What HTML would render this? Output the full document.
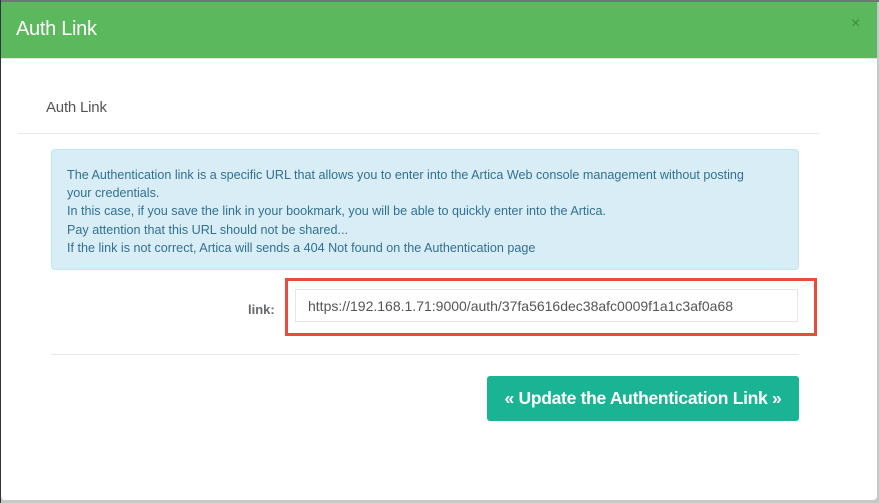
<!DOCTYPE html>
<html><head><meta charset="utf-8"><style>
body{margin:0;width:879px;height:503px;overflow:hidden;background:#c8c8c8;font-family:"Liberation Sans",sans-serif;position:relative}
.lb0{position:absolute;left:0;top:0;width:1px;height:503px;background:#2f3640}
.tp{position:absolute;left:0;top:0;width:879px;height:2px;background:#6a7a70}
.m{position:absolute;left:1px;top:2px;width:876px;height:498px;background:#fff;border-radius:0 0 4px 4px;overflow:hidden}
.h{position:absolute;left:0;top:0;width:100%;height:56px;background:#5cb85c;border-bottom:1px solid #e5e5e5}
.h span{position:absolute;left:15px;top:16px;font-size:20px;color:#fff;letter-spacing:-0.3px}
.h i{position:absolute;left:850px;top:13px;font-style:normal;color:#3f8a3f;font-size:16px}
.t{position:absolute;left:45px;top:97px;font-size:15px;color:#555;letter-spacing:-0.2px}
.hr1{position:absolute;left:17px;top:131px;width:801px;height:1px;background:#e7eaec}
.al{position:absolute;left:50px;top:147px;width:746px;height:119px;background:#d9edf7;border:1px solid #bce8f1;border-radius:4px}
.al p{margin:0;position:absolute;left:15px;top:16px;width:695px;font-size:12.6px;line-height:18.2px;color:#31708f}
.lb{position:absolute;left:247px;top:300px;font-size:13px;font-weight:bold;color:#676a6c}
.rb{position:absolute;left:284px;top:276px;width:526px;height:52px;border:3px solid #e74c3c}
.in{position:absolute;left:294px;top:287px;width:503px;height:33px;border:1px solid #e5e6e7;box-sizing:border-box;font-size:14px;color:#555;padding:8px 12px;line-height:16px;white-space:nowrap}
.hr2{position:absolute;left:50px;top:352px;width:748px;height:1px;background:#e7eaec}
.bt{position:absolute;left:486px;top:374px;width:312px;height:45px;background:#1ab394;border-radius:3px;color:#fff;font-weight:bold;font-size:17.5px;text-align:center;line-height:45px;letter-spacing:-0.3px}
</style></head><body>
<div class="tp"></div>
<div class="m">
<div class="h"><span>Auth Link</span><i>×</i></div>
<div class="t">Auth Link</div>
<div class="hr1"></div>
<div class="al"><p>The Authentication link is a specific URL that allows you to enter into the Artica Web console management without posting your credentials.<br>In this case, if you save the link in your bookmark, you will be able to quickly enter into the Artica.<br>Pay attention that this URL should not be shared...<br>If the link is not correct, Artica will sends a 404 Not found on the Authentication page</p></div>
<div class="lb">link:</div>
<div class="rb"></div>
<div class="in">https://192.168.1.71:9000/auth/37fa5616dec38afc0009f1a1c3af0a68</div>
<div class="hr2"></div>
<div class="bt">« Update the Authentication Link »</div>
</div>
<div class="lb0"></div>
</body></html>
